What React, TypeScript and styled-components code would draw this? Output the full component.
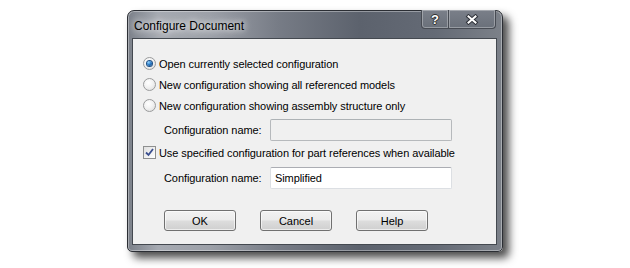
import styled, { createGlobalStyle } from "styled-components";

const GlobalStyle = createGlobalStyle`
  body {
    margin: 0;
    background: #ffffff;
    font-family: "Liberation Sans", Arial, sans-serif;
  }
`;

const Page = styled.div`
  width: 630px;
  height: 268px;
  padding: 10px 0 0 127px;
  box-sizing: border-box;
`;

const Window = styled.div`
  width: 376px;
  height: 242px;
  box-sizing: border-box;
  border: 1px solid #2b2e34;
  border-radius: 7px 7px 5px 5px;
  background: linear-gradient(
    to right,
    #7b8089 0%,
    #a6aab2 8%,
    #9ca0a8 22%,
    #777c86 40%,
    #5c626d 62%,
    #646a75 82%,
    #7c8189 100%
  );
  box-shadow: 6px 6px 8px rgba(0, 0, 0, 0.7),
    inset 0 0 0 1px rgba(255, 255, 255, 0.35);
  display: flex;
  flex-direction: column;
`;

const TitleBar = styled.div`
  height: 27px;
  display: flex;
  justify-content: space-between;
  align-items: flex-start;
`;

const Title = styled.span`
  font-family: "Liberation Sans", Arial, sans-serif;
  font-size: 12px;
  color: #000;
  padding: 8px 0 0 6px;
  text-shadow: 0 0 6px rgba(255, 255, 255, 0.95), 0 0 10px rgba(255, 255, 255, 0.8);
`;

const CaptionGroup = styled.div`
  display: flex;
  margin: -1px 6px 0 0;
`;

const CaptionButton = styled.div<{ $w: number; $first?: boolean }>`
  width: ${(p) => p.$w}px;
  height: 19px;
  box-sizing: border-box;
  border: 1px solid #474b53;
  border-top: none;
  border-left: ${(p) => (p.$first ? "1px solid #474b53" : "none")};
  border-radius: ${(p) => (p.$first ? "0 0 0 4px" : "0 0 4px 0")};
  background: linear-gradient(to bottom, #7a7f89, #6a707a);
  box-shadow: inset 0 0 0 1px rgba(255, 255, 255, 0.3);
  display: flex;
  align-items: center;
  justify-content: center;
  font-family: "Liberation Sans", Arial, sans-serif;
  font-weight: bold;
  font-size: 13px;
  color: #fff;
  text-shadow: 0 0 1px #222, 1px 0 0 #333, -1px 0 0 #333, 0 1px 0 #333, 0 -1px 0 #333;
`;

const Client = styled.div`
  flex: 1;
  margin: 0 5px 6px 4px;
  background: #f0f0f0;
  border: 1px solid #444950;
  padding: 14px 0 0 10px;
  display: flex;
  flex-direction: column;
  font-size: 11px;
  letter-spacing: -0.08px;
  color: #000;
`;

const OptionRow = styled.label<{ $h?: number }>`
  height: ${(p) => p.$h ?? 21}px;
  display: flex;
  align-items: center;
  gap: 3px;
  white-space: nowrap;
`;

const Radio = styled.span<{ $on?: boolean }>`
  width: 13px;
  height: 13px;
  box-sizing: border-box;
  border-radius: 50%;
  border: 1px solid #9a9b9c;
  background: radial-gradient(circle at 40% 35%, #ffffff 0%, #f2f2f2 45%, #dadada 100%);
  display: flex;
  align-items: center;
  justify-content: center;
  flex-shrink: 0;

  &::after {
    content: "";
    display: ${(p) => (p.$on ? "block" : "none")};
    width: 5px;
    height: 5px;
    border-radius: 50%;
    background: radial-gradient(circle at 35% 30%, #8fd2ff 0%, #2a7cc8 45%, #0c3a74 100%);
    box-shadow: 0 0 0 1px #1d4f85;
  }
`;

const Checkbox = styled.span`
  width: 13px;
  height: 13px;
  box-sizing: border-box;
  border: 1px solid #8e8f8f;
  background: linear-gradient(135deg, #e0e0e0, #ffffff);
  display: flex;
  align-items: center;
  justify-content: center;
  flex-shrink: 0;
`;

const FieldRow = styled.div`
  margin-top: 3px;
  display: flex;
  align-items: center;
  padding-left: 21px;
`;

const FieldLabel = styled.span`
  width: 106px;
`;

const TextBox = styled.div<{ $disabled?: boolean }>`
  width: 182px;
  height: 22px;
  box-sizing: border-box;
  border: 1px solid ${(p) => (p.$disabled ? "#b6b9bc" : "#dcdfe3")};
  border-top-color: ${(p) => (p.$disabled ? "#adb2b5" : "#abadb3")};
  border-radius: 2px;
  background: ${(p) => (p.$disabled ? "#f0f0f0" : "#ffffff")};
  padding: 0 4px;
  display: flex;
  align-items: center;
  font-size: 11px;
`;

const ButtonRow = styled.div`
  margin-top: 21px;
  display: flex;
  gap: 24px;
  padding-left: 21px;
`;

const Button = styled.button`
  width: 72px;
  height: 21px;
  padding: 0;
  border: 1px solid #707070;
  border-radius: 3px;
  background: linear-gradient(
    to bottom,
    #f2f2f2 0%,
    #ebebeb 48%,
    #dddddd 52%,
    #cfcfcf 100%
  );
  box-shadow: inset 0 0 0 1px rgba(255, 255, 255, 0.6);
  font-family: "Liberation Sans", Arial, sans-serif;
  font-size: 11px;
  color: #000;
`;

const CloseGlyph = () => (
  <svg width="14" height="11" viewBox="0 0 14 11">
    <path d="M3.5 2.5 L10.5 8.5 M10.5 2.5 L3.5 8.5" stroke="#2e3138" strokeWidth="4" strokeLinecap="square" />
    <path d="M3.5 2.5 L10.5 8.5 M10.5 2.5 L3.5 8.5" stroke="#ffffff" strokeWidth="2" strokeLinecap="square" />
  </svg>
);

const CheckGlyph = () => (
  <svg width="9" height="9" viewBox="0 0 9 9">
    <path d="M1 4.5 L3.5 7 L8 1" fill="none" stroke="#3b4f8f" strokeWidth="1.8" />
  </svg>
);

const App = () => {
  return (
    <Page>
      <GlobalStyle />
      <Window>
        <TitleBar>
          <Title>Configure Document</Title>
          <CaptionGroup>
            <CaptionButton $w={28} $first>
              ?
            </CaptionButton>
            <CaptionButton $w={47}>
              <CloseGlyph />
            </CaptionButton>
          </CaptionGroup>
        </TitleBar>
        <Client>
          <OptionRow>
            <Radio $on />
            Open currently selected configuration
          </OptionRow>
          <OptionRow>
            <Radio />
            New configuration showing all referenced models
          </OptionRow>
          <OptionRow>
            <Radio />
            New configuration showing assembly structure only
          </OptionRow>
          <FieldRow>
            <FieldLabel>Configuration name:</FieldLabel>
            <TextBox $disabled />
          </FieldRow>
          <OptionRow $h={23}>
            <Checkbox>
              <CheckGlyph />
            </Checkbox>
            Use specified configuration for part references when available
          </OptionRow>
          <FieldRow>
            <FieldLabel>Configuration name:</FieldLabel>
            <TextBox>Simplified</TextBox>
          </FieldRow>
          <ButtonRow>
            <Button>OK</Button>
            <Button>Cancel</Button>
            <Button>Help</Button>
          </ButtonRow>
        </Client>
      </Window>
    </Page>
  );
};

export default App;
